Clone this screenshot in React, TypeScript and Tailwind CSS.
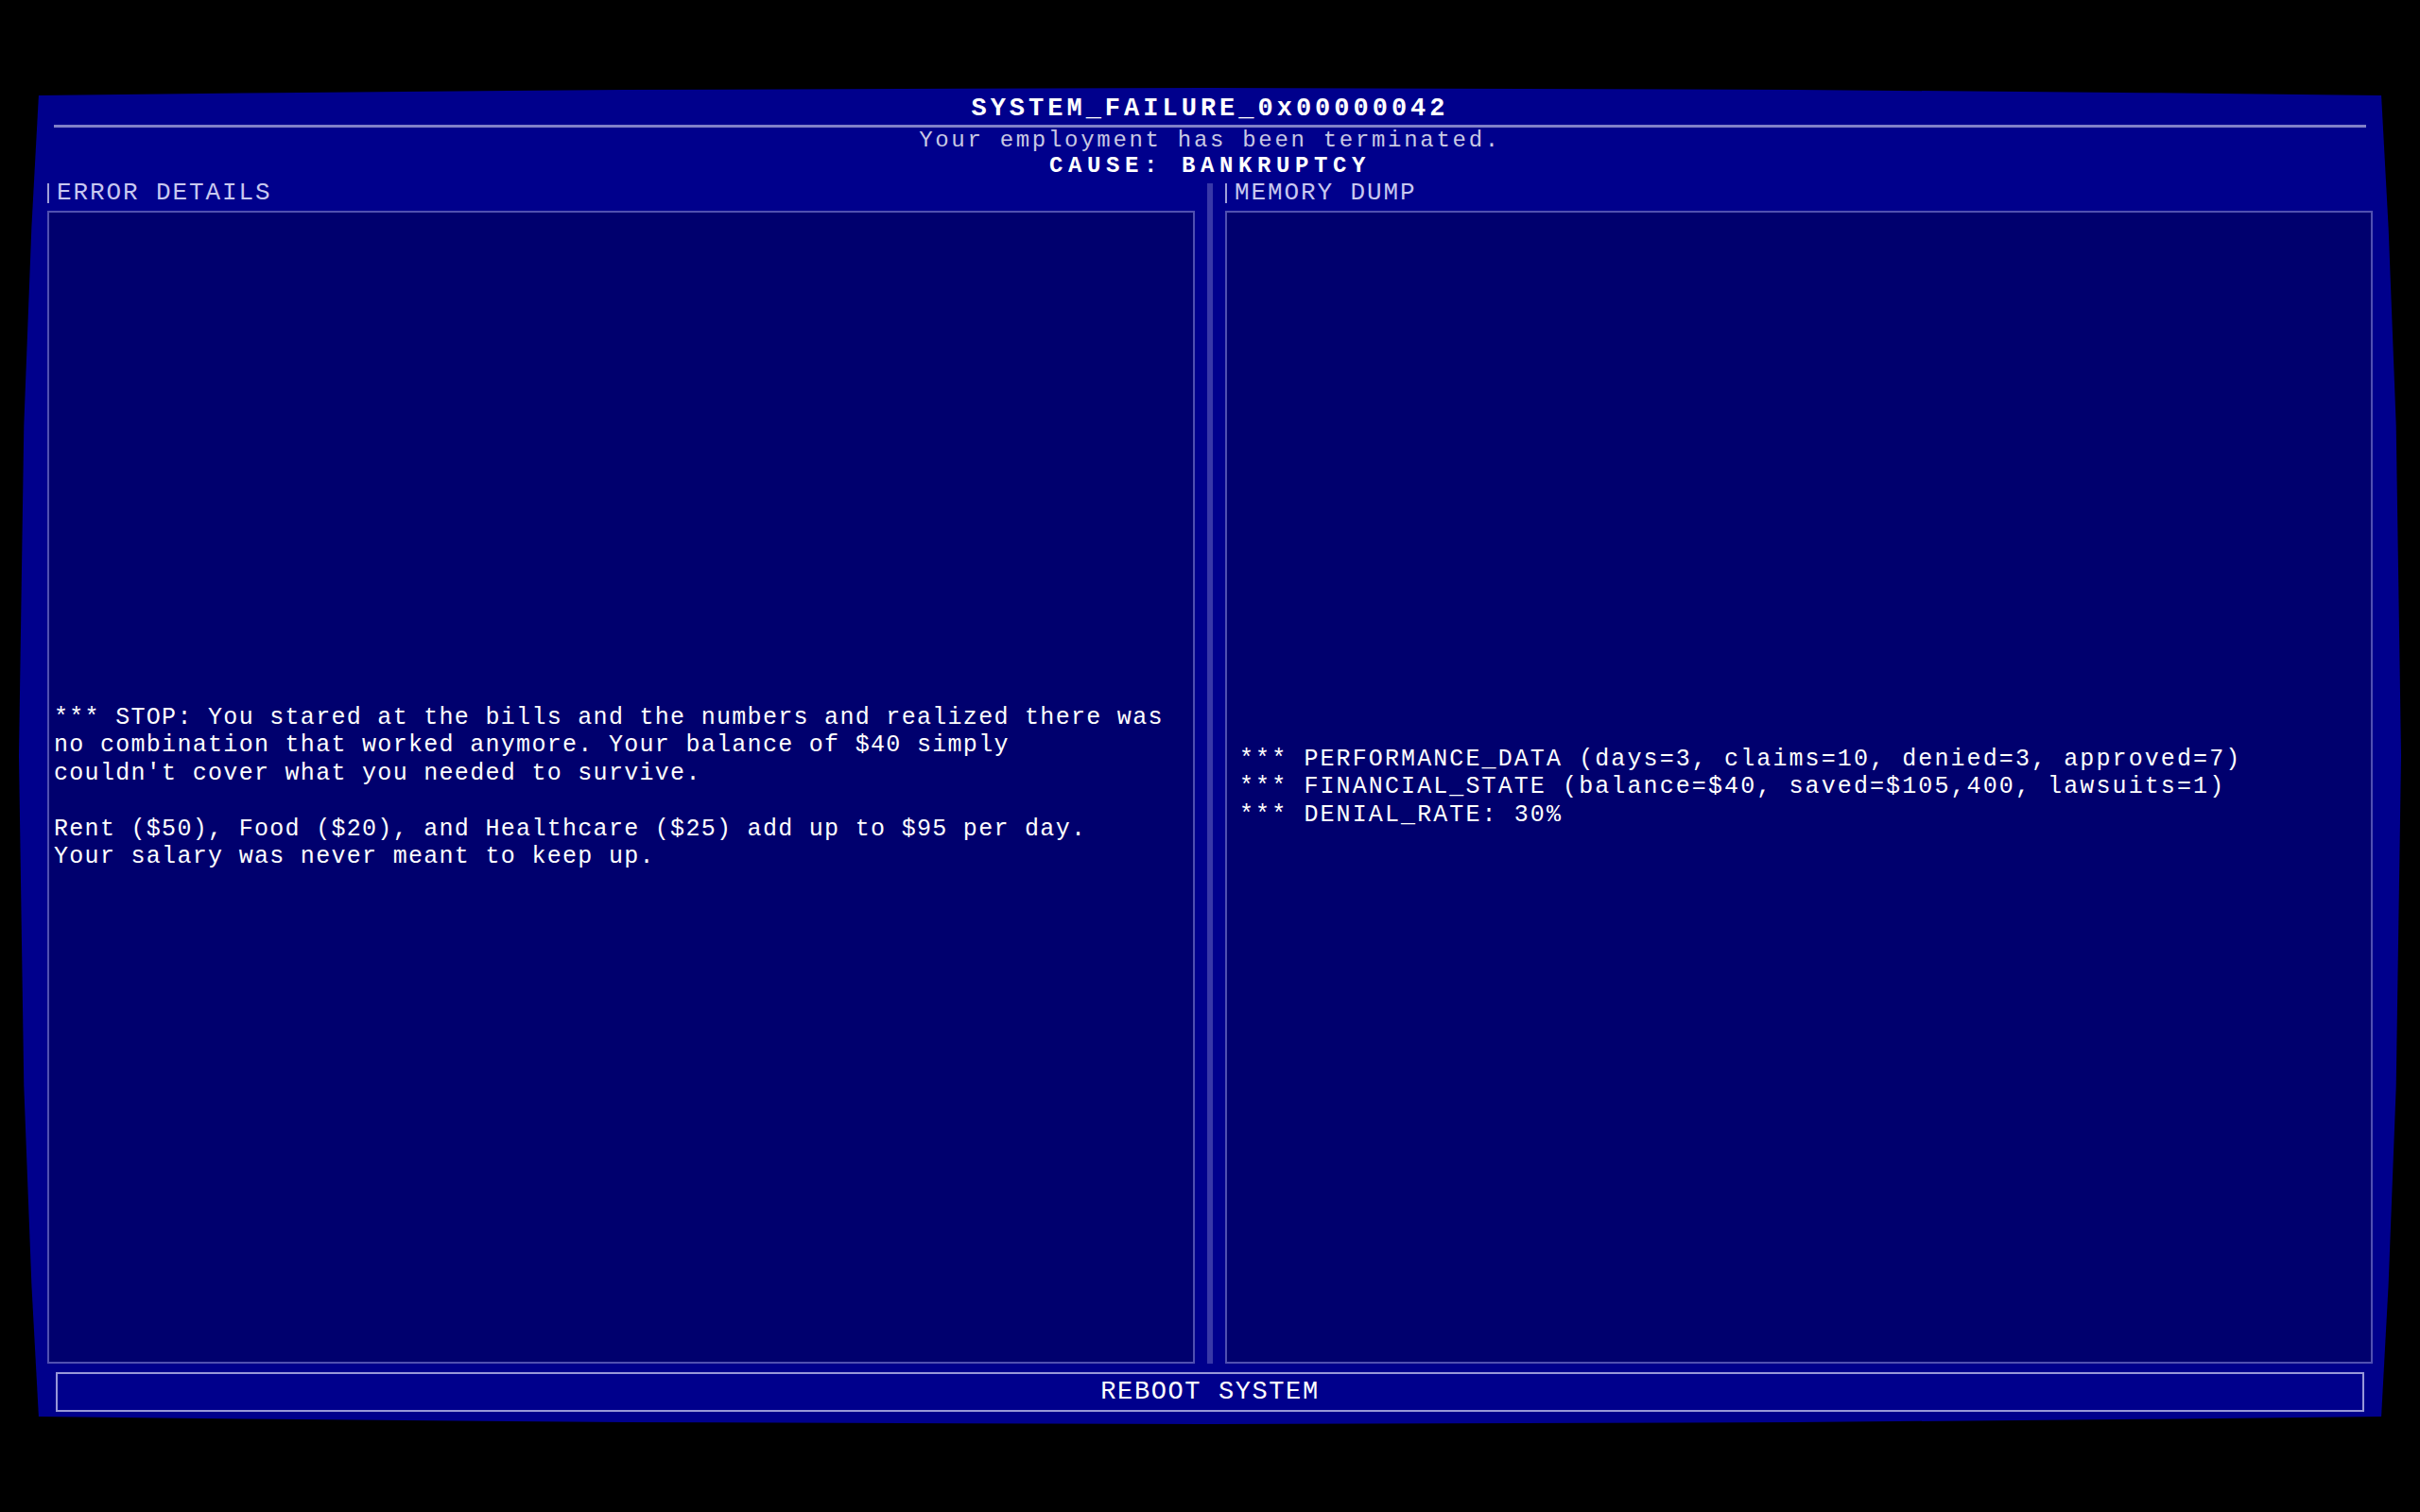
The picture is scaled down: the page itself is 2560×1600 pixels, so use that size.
import React from 'react';

const errorLines = [
  "*** STOP: You stared at the bills and the numbers and realized there was",
  "no combination that worked anymore. Your balance of $40 simply",
  "couldn't cover what you needed to survive.",
  "",
  "Rent ($50), Food ($20), and Healthcare ($25) add up to $95 per day.",
  "Your salary was never meant to keep up.",
];

const dumpLines = [
  "*** PERFORMANCE_DATA (days=3, claims=10, denied=3, approved=7)",
  "*** FINANCIAL_STATE (balance=$40, saved=$105,400, lawsuits=1)",
  "*** DENIAL_RATE: 30%",
];

const PanelLabel = ({ text }: { text: string }) => (
  <div className="flex items-start h-[27px] text-[26px] leading-[27px] tracking-[1.9px] text-[#c8c8f0]">
    <span className="shrink-0 block w-[2px] h-[21px] mt-[3px] mr-[8px] bg-[#a0a0d8]" />
    <span>{text}</span>
  </div>
);

export default function App() {
  return (
    <div className="w-[2560px] h-[1600px] bg-black pt-[93px] pl-[20px] font-['Liberation_Mono',monospace]">
      <div className="w-[2520px] h-[1414px] bg-[#00008c] flex flex-col px-[30px] pt-[9px] pb-[13px] [clip-path:polygon(0.83%_0.57%,10.66%_0.365%,25.4%_0.14%,50%_0%,74.6%_0.14%,89.34%_0.365%,99.17%_0.57%,99.47%_10.46%,99.79%_25.29%,100%_50%,99.79%_74.71%,99.47%_89.54%,99.17%_99.43%,89.34%_99.635%,74.6%_99.86%,50%_100%,25.4%_99.86%,10.66%_99.635%,0.83%_99.43%,0.53%_89.54%,0.21%_74.71%,0%_50%,0.21%_25.29%,0.53%_10.46%)]">
        {/* header */}
        <div className="text-center text-white font-bold text-[27px] leading-[27px] tracking-[4px]">
          SYSTEM_FAILURE_0x00000042
        </div>
        <div className="mt-[3px] mx-[7px] h-[3px] bg-[#8080c8]" />
        <div className="mt-[2px] text-center text-[#c8c8e4] text-[24px] leading-[24px] tracking-[2.7px]">
          Your employment has been terminated.
        </div>
        <div className="mt-[3px] text-center text-white font-bold text-[24px] leading-[24px] tracking-[5.6px]">
          CAUSE: BANKRUPTCY
        </div>

        {/* panels */}
        <div className="mt-[3px] flex-1 min-h-0 grid grid-cols-[1fr_6px_1fr] gap-x-[13px]">
          <div className="flex flex-col min-h-0">
            <PanelLabel text="ERROR DETAILS" />
            <div className="mt-[5px] flex-1 border-2 border-[#5050b0] bg-[#00006e] flex flex-col justify-center px-[5px] text-white text-[25px] leading-[29.5px] tracking-[1.3px]">
              {errorLines.map((line, i) => (
                <div key={i} className="whitespace-pre h-[29.5px]">
                  {line}
                </div>
              ))}
            </div>
          </div>
          <div className="mt-[3px] bg-[#3838a8]" />
          <div className="flex flex-col min-h-0">
            <PanelLabel text="MEMORY DUMP" />
            <div className="mt-[5px] flex-1 border-2 border-[#5050b0] bg-[#00006e] flex flex-col justify-center px-[13px] text-white text-[25px] leading-[29.5px] tracking-[2.1px]">
              {dumpLines.map((line, i) => (
                <div key={i} className="whitespace-pre h-[29.5px]">
                  {line}
                </div>
              ))}
            </div>
          </div>
        </div>

        {/* reboot */}
        <button className="mt-[9px] mx-[9px] h-[42px] border-2 border-[#9898d8] bg-[#00008c] text-white text-[27px] leading-[27px] tracking-[1.6px] font-['Liberation_Mono',monospace]">
          REBOOT SYSTEM
        </button>
      </div>
    </div>
  );
}
